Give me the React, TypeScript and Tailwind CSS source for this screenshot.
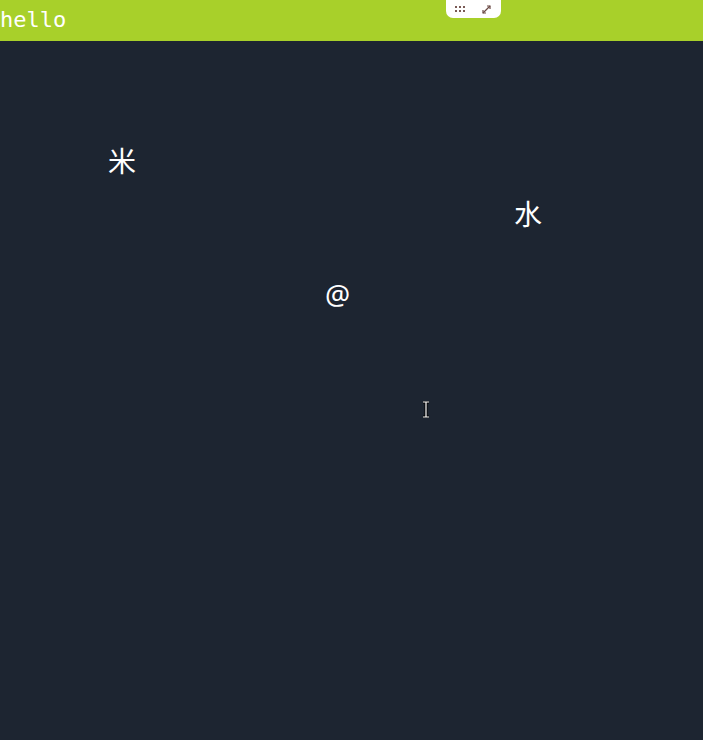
import React from "react";

export default function App() {
  return (
    <div className="w-[703px] h-[740px] bg-[#1d2531] relative overflow-hidden flex flex-col">
      <div className="h-[41px] bg-[#a8d02a] relative shrink-0">
        <span
          className="absolute left-0 top-[6px] text-white text-[22px] leading-[28px]"
          style={{ fontFamily: '"DejaVu Sans Mono", monospace' }}
        >
          hello
        </span>
        <div className="absolute left-[446px] top-0 w-[55px] h-[18px] bg-white rounded-b-[7px] flex items-center justify-between px-[8px]">
          <svg width="12" height="6" viewBox="0 0 12 6" className="ml-[1px]">
            {[0, 4, 8].map((x) => (
              <g key={x} fill="#7a5a55">
                <rect x={x} y={0} width="2" height="2" />
                <rect x={x} y={4} width="2" height="2" />
              </g>
            ))}
          </svg>
          <svg width="9" height="9" viewBox="0 0 9 9" fill="none" stroke="#6b4a45" strokeWidth="1.2" className="mr-[2px]">
            <path d="M1 8 L8 1" />
            <path d="M5 1 H8 V4" />
            <path d="M1 5 V8 H4" />
          </svg>
        </div>
      </div>
      <div
        className="flex-1 relative text-white text-[28px]"
        style={{ fontFamily: '"Noto Sans", "Noto Sans CJK SC", sans-serif' }}
      >
        <span className="absolute left-[108px] top-[99px]">米</span>
        <span className="absolute left-[514px] top-[152px]">水</span>
        <span className="absolute left-[325px] top-[232px]">@</span>
        <span className="absolute left-[422px] top-[360px]">
          <svg width="8" height="17" viewBox="0 0 8 17">
            <path d="M1 1 H7 M4 1 V16 M1 16 H7" stroke="#000" strokeWidth="3" />
            <path d="M1 1 H7 M4 1 V16 M1 16 H7" stroke="#fff" strokeWidth="1.2" />
          </svg>
        </span>
      </div>
    </div>
  );
}
